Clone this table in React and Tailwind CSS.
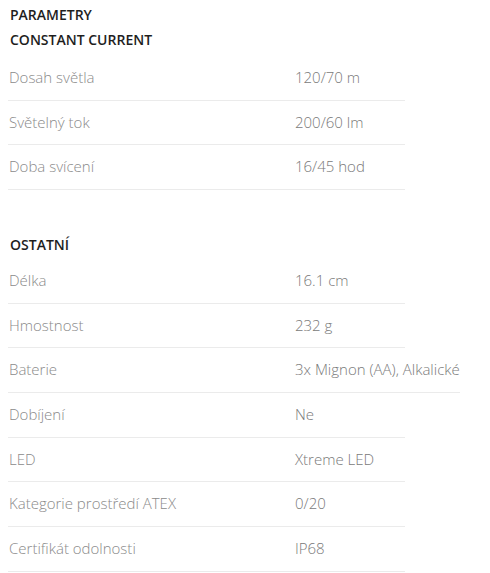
import React from "react";

const constantCurrent = [
  { label: "Dosah světla", value: "120/70 m" },
  { label: "Světelný tok", value: "200/60 lm" },
  { label: "Doba svícení", value: "16/45 hod" },
];

const other = [
  { label: "Délka", value: "16.1 cm" },
  { label: "Hmostnost", value: "232 g" },
  { label: "Baterie", value: "3x Mignon (AA), Alkalické" },
  { label: "Dobíjení", value: "Ne" },
  { label: "LED", value: "Xtreme LED" },
  { label: "Kategorie prostředí ATEX", value: "0/20" },
  { label: "Certifikát odolnosti", value: "IP68" },
];

const Row = ({ label, value }) => (
  <div className="flex w-max min-w-[397px] h-[44.67px] items-center border-b border-[#ebebeb] pl-[1px] pb-[1px]">
    <span className="w-[286px] shrink-0 text-[#8a8a8a]">{label}</span>
    <span className="whitespace-nowrap text-[#7a7a7a]">{value}</span>
  </div>
);

export default function App() {
  return (
    <div className="bg-white min-h-[573px] px-[8px] pt-[5px] font-['Open_Sans',sans-serif] text-[15px] font-light">
      <h3 className="text-[14px] leading-[20px] font-semibold text-[#1e1e1e] pl-[2px]">PARAMETRY</h3>
      <h4 className="mt-[5px] text-[14px] leading-[20px] font-semibold text-[#1e1e1e] pl-[2px]">
        CONSTANT CURRENT
      </h4>
      <div className="mt-[6px]">
        {constantCurrent.map((r) => (
          <Row key={r.label} {...r} />
        ))}
      </div>

      <h4 className="mt-[45px] text-[14px] leading-[20px] font-semibold text-[#1e1e1e] pl-[2px]">OSTATNÍ</h4>
      <div className="mt-[4px]">
        {other.map((r) => (
          <Row key={r.label} {...r} />
        ))}
      </div>
    </div>
  );
}
